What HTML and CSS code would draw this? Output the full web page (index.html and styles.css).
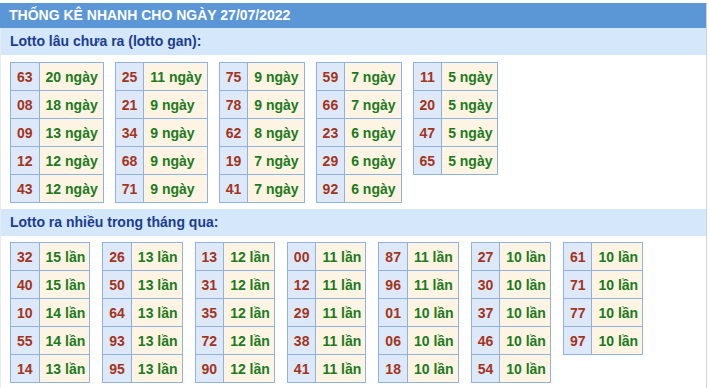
FILE: index.html
```html
<!DOCTYPE html>
<html lang="vi">
<head>
<meta charset="utf-8">
<title>Thống kê nhanh</title>
<link rel="stylesheet" href="styles.css">
</head>
<body>
<div class="box">
  <div class="title">THỐNG KÊ NHANH CHO NGÀY 27/07/2022</div>
  <div class="sub">Lotto lâu chưa ra (lotto gan):</div>
  <div class="group">
    <table class="lt"><tr><td class="n">63</td><td class="v">20 ngày</td></tr><tr><td class="n">08</td><td class="v">18 ngày</td></tr><tr><td class="n">09</td><td class="v">13 ngày</td></tr><tr><td class="n">12</td><td class="v">12 ngày</td></tr><tr><td class="n">43</td><td class="v">12 ngày</td></tr></table>
    <table class="lt"><tr><td class="n">25</td><td class="v">11 ngày</td></tr><tr><td class="n">21</td><td class="v">9 ngày</td></tr><tr><td class="n">34</td><td class="v">9 ngày</td></tr><tr><td class="n">68</td><td class="v">9 ngày</td></tr><tr><td class="n">71</td><td class="v">9 ngày</td></tr></table>
    <table class="lt"><tr><td class="n">75</td><td class="v">9 ngày</td></tr><tr><td class="n">78</td><td class="v">9 ngày</td></tr><tr><td class="n">62</td><td class="v">8 ngày</td></tr><tr><td class="n">19</td><td class="v">7 ngày</td></tr><tr><td class="n">41</td><td class="v">7 ngày</td></tr></table>
    <table class="lt"><tr><td class="n">59</td><td class="v">7 ngày</td></tr><tr><td class="n">66</td><td class="v">7 ngày</td></tr><tr><td class="n">23</td><td class="v">6 ngày</td></tr><tr><td class="n">29</td><td class="v">6 ngày</td></tr><tr><td class="n">92</td><td class="v">6 ngày</td></tr></table>
    <table class="lt"><tr><td class="n">11</td><td class="v">5 ngày</td></tr><tr><td class="n">20</td><td class="v">5 ngày</td></tr><tr><td class="n">47</td><td class="v">5 ngày</td></tr><tr><td class="n">65</td><td class="v">5 ngày</td></tr></table>
  </div>
  <div class="sub">Lotto ra nhiều trong tháng qua:</div>
  <div class="group group-2">
    <table class="lt"><tr><td class="n">32</td><td class="v">15 lần</td></tr><tr><td class="n">40</td><td class="v">15 lần</td></tr><tr><td class="n">10</td><td class="v">14 lần</td></tr><tr><td class="n">55</td><td class="v">14 lần</td></tr><tr><td class="n">14</td><td class="v">13 lần</td></tr></table>
    <table class="lt"><tr><td class="n">26</td><td class="v">13 lần</td></tr><tr><td class="n">50</td><td class="v">13 lần</td></tr><tr><td class="n">64</td><td class="v">13 lần</td></tr><tr><td class="n">93</td><td class="v">13 lần</td></tr><tr><td class="n">95</td><td class="v">13 lần</td></tr></table>
    <table class="lt"><tr><td class="n">13</td><td class="v">12 lần</td></tr><tr><td class="n">31</td><td class="v">12 lần</td></tr><tr><td class="n">35</td><td class="v">12 lần</td></tr><tr><td class="n">72</td><td class="v">12 lần</td></tr><tr><td class="n">90</td><td class="v">12 lần</td></tr></table>
    <table class="lt"><tr><td class="n">00</td><td class="v">11 lần</td></tr><tr><td class="n">12</td><td class="v">11 lần</td></tr><tr><td class="n">29</td><td class="v">11 lần</td></tr><tr><td class="n">38</td><td class="v">11 lần</td></tr><tr><td class="n">41</td><td class="v">11 lần</td></tr></table>
    <table class="lt"><tr><td class="n">87</td><td class="v">11 lần</td></tr><tr><td class="n">96</td><td class="v">11 lần</td></tr><tr><td class="n">01</td><td class="v">10 lần</td></tr><tr><td class="n">06</td><td class="v">10 lần</td></tr><tr><td class="n">18</td><td class="v">10 lần</td></tr></table>
    <table class="lt"><tr><td class="n">27</td><td class="v">10 lần</td></tr><tr><td class="n">30</td><td class="v">10 lần</td></tr><tr><td class="n">37</td><td class="v">10 lần</td></tr><tr><td class="n">46</td><td class="v">10 lần</td></tr><tr><td class="n">54</td><td class="v">10 lần</td></tr></table>
    <table class="lt"><tr><td class="n">61</td><td class="v">10 lần</td></tr><tr><td class="n">71</td><td class="v">10 lần</td></tr><tr><td class="n">77</td><td class="v">10 lần</td></tr><tr><td class="n">97</td><td class="v">10 lần</td></tr></table>
  </div>
</div>
</body>
</html>
```
FILE: styles.css
```css
html, body {
  margin: 0;
  padding: 0;
  background: #ffffff;
}
body {
  font-family: "Liberation Sans", Arial, Roboto, sans-serif;
  font-size: 14px;
  font-weight: bold;
}
.box {
  margin-top: 3px;
  width: 707px;
  border-right: 1px solid #c9d3df;
  border-left: 1px solid #e6ebf2;
  border-bottom: 1px solid #eef2f7;
  box-sizing: border-box;
  padding-bottom: 2px;
}
.title {
  background: #5b97d6;
  color: #ffffff;
  height: 25px;
  line-height: 25px;
  padding-left: 9px;
  margin-left: -1px;
}
.sub {
  background: #d5e7fa;
  color: #1b3d8f;
  height: 27px;
  line-height: 27px;
  padding-left: 9px;
}
.group {
  display: flex;
  flex-wrap: wrap;
  align-items: flex-start;
  gap: 11px;
  padding: 7px 9px 6px;
}
.group-2 {
  gap: 12px;
  padding-top: 6px;
}
.lt {
  border-collapse: collapse;
}
.lt td {
  border: 1px solid #90b2e0;
  height: 27px;
  padding: 0 6px;
  white-space: nowrap;
}
.n {
  background: #dde9f9;
  color: #a4341c;
  text-align: center;
}
.v {
  background: #fdf4e4;
  color: #207a1c;
  padding-right: 5px;
}
.lt .v {
  padding-right: 5px;
}
.group-2 .lt .v {
  padding-right: 4px;
}
```
